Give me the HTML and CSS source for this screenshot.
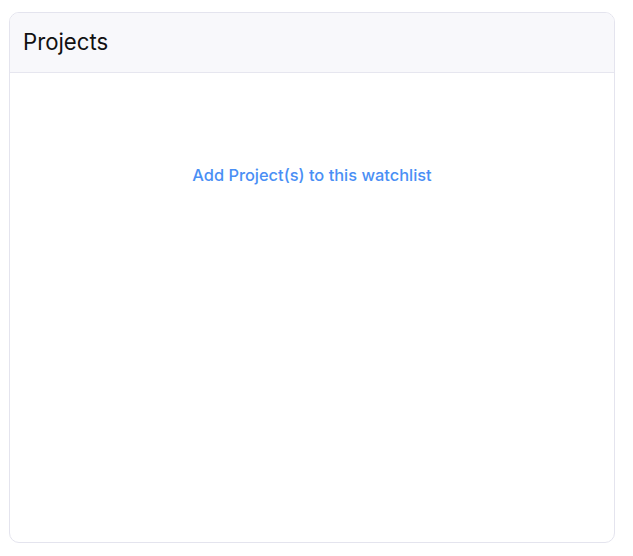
FILE: index.html
```html
<!DOCTYPE html>
<html>
<head>
<meta charset="utf-8">
<link rel="stylesheet" href="styles.css">
</head>
<body>
<div class="card">
  <div class="card-header">
    <h2 class="title">Projects</h2>
  </div>
  <div class="card-body">
    <a class="add-link" href="#">Add Project(s) to this watchlist</a>
  </div>
</div>
</body>
</html>
```

FILE: styles.css
```css
html, body {
  margin: 0;
  padding: 0;
  background: #ffffff;
}
body {
  padding: 12px 0 0 9px;
  font-family: Inter, "Noto Sans", sans-serif;
}
.card {
  width: 604px;
  height: 529px;
  border: 1px solid #e4e4ee;
  border-radius: 10px;
  overflow: hidden;
  display: flex;
  flex-direction: column;
  background: #fff;
}
.card-header {
  height: 59px;
  background: #f8f8fb;
  border-bottom: 1px solid #e6e6ef;
  display: flex;
  align-items: center;
  padding: 0 13px 2px;
  box-sizing: border-box;
  height: 60px;
}
.title {
  margin: 0;
  font-size: 22.2px;
  font-weight: 400;
  color: #111;
}
.card-body {
  flex: 1;
  display: flex;
  justify-content: center;
  padding-top: 91px;
}
.add-link {
  color: #4a8ff5;
  font-size: 16.4px;
  font-weight: 500;
  text-decoration: none;
  line-height: 22px;
  height: 22px;
}
```
